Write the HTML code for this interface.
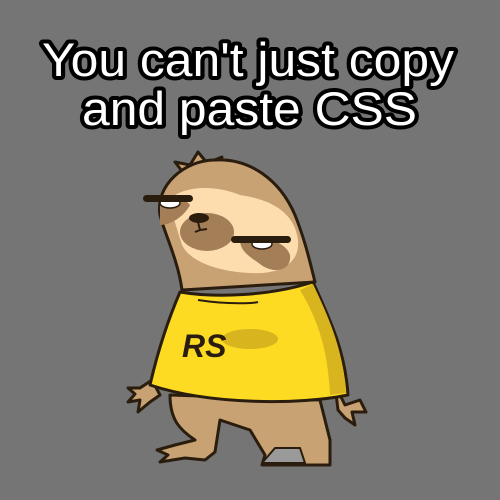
<!DOCTYPE html>
<html><head><style>
html,body{margin:0;padding:0;background:#757575;}
svg{display:block}
</style></head><body>
<svg width="500" height="500" viewBox="0 0 500 500" xmlns="http://www.w3.org/2000/svg">
<rect width="500" height="500" fill="#757575"/>
<g font-family="Liberation Sans, Arial, sans-serif" font-size="47" fill="#fff" stroke="#000" stroke-width="8" stroke-linejoin="round" paint-order="stroke">
<text x="42" y="76" textLength="412" lengthAdjust="spacingAndGlyphs">You can't just copy</text>
<text x="82" y="125" textLength="335" lengthAdjust="spacingAndGlyphs">and paste CSS</text>
</g>
<g stroke="#2a1d0e" stroke-width="3" stroke-linejoin="round" stroke-linecap="round">
<path d="M185 175 L175 162 L190 165 L198 152 L207 163 L222 157 L215 170 Z" fill="#c8a273"/>
<path d="M335 385 L345 405 L360 400 L366 412 L352 412 L355 425 L345 418 L338 410 Z" fill="#c8a273"/>
<path d="M152 380 L140 388 L128 388 L135 394 L128 402 L140 400 L138 412 L150 402 L160 395 Z" fill="#c8a273"/>
<path d="M170 395 C170 420 180 430 195 440 L175 445 L157 450 L168 455 L160 462 L185 458 L205 460 L215 452 L220 420 L250 430 L265 455 L262 465 L330 465 L330 440 L320 400 Z" fill="#c8a273"/>
<path d="M262 463 L275 448 L300 448 L305 463 Z" fill="#9a9a9a" stroke-width="2"/>
<path d="M182 290 C178 260 165 235 160 215 C155 185 185 160 215 160 C250 158 280 180 295 215 C305 240 310 262 315 282 Z" fill="#c8a273"/>
<path d="M180 292 C215 298 270 296 313 282 C330 320 345 350 348 395 C300 405 210 405 150 385 C158 350 168 320 180 292 Z" fill="#fddb22"/>
</g>
<path d="M313 284 C330 320 343 350 346 393 L330 395 C328 350 318 320 300 290 Z" fill="#d8b41e"/>
<path d="M168 200 C185 185 215 185 240 195 C275 200 295 215 298 240 C300 260 285 275 250 273 C220 272 190 262 182 245 Z" fill="#fddcae"/>
<ellipse cx="207" cy="232" rx="27" ry="19" fill="#a47e56"/>
<path d="M240 240 C250 234 285 238 290 255 C292 272 272 274 260 264 C252 258 240 252 240 240 Z" fill="#a47e56"/>
<path d="M160 200 C172 195 185 198 190 205 C185 215 172 225 160 225 Z" fill="#a47e56"/>
<ellipse cx="199" cy="218" rx="10" ry="5" fill="#2a1d0e"/>
<path d="M198 222 L200 230 L195 232 M200 230 L207 229" stroke="#2a1d0e" stroke-width="2" fill="none"/>
<ellipse cx="170" cy="203" rx="10" ry="5" fill="#fff" stroke="#2a1d0e" stroke-width="1.5"/>
<ellipse cx="262" cy="244" rx="10" ry="5" fill="#fff" stroke="#2a1d0e" stroke-width="1.5"/>
<rect x="143" y="195" width="50" height="7" rx="3.5" fill="#2a1d0e"/>
<rect x="231" y="236" width="60" height="7" rx="3.5" fill="#2a1d0e"/>
<path d="M198 300 C230 305 255 303 258 302" stroke="#2a1d0e" stroke-width="2" fill="none"/>
<ellipse cx="250" cy="339" rx="28" ry="10" fill="#d8b41e"/>
<text x="182" y="357" font-family="Liberation Sans, Arial, sans-serif" font-weight="bold" font-style="italic" font-size="32" fill="#2a1d0e">RS</text>
</svg>
</body></html>
